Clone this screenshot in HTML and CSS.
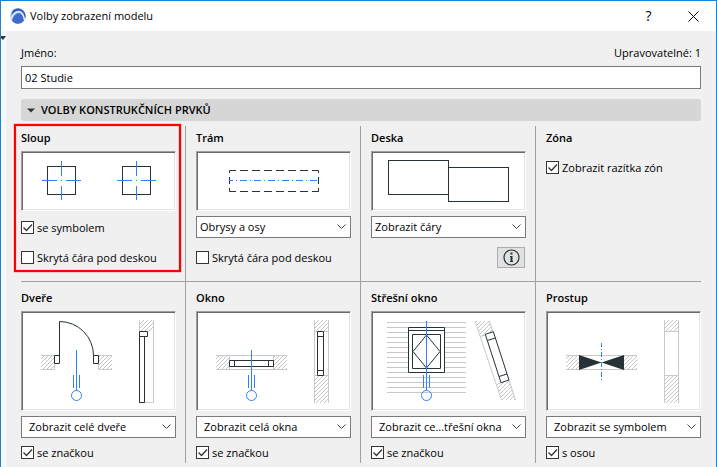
FILE: index.html
```html
<!DOCTYPE html>
<html lang="cs">
<head>
<meta charset="utf-8">
<title>Volby zobrazení modelu</title>
<link rel="stylesheet" href="styles.css">
</head>
<body>
<svg class="defs" width="0" height="0" aria-hidden="true">
  <defs>
    <pattern id="hatch" width="4" height="4" patternUnits="userSpaceOnUse">
      <path d="M-1 5L5 -1M-1 1L1 -1M3 5L5 3" stroke="#c4c4c4" stroke-width="1"/>
    </pattern>
    <g id="marker" class="blue">
      <path d="M55.5 39V79M52.5 64V77M58.5 64V77"/>
      <circle cx="55.5" cy="84.5" r="5"/>
    </g>
    <g id="column">
      <rect class="ink" x="26.5" y="15.5" width="28" height="28"/>
      <path class="blue" d="M21 29.5H36M40 29.5H41M45 29.5H60M40.5 10V25M40.5 35V49"/>
    </g>
    <g id="wall-section">
      <path class="hatch" d="M118 9H133V20H118ZM118 65H133V92H118Z"/>
      <path class="gray" d="M118.5 9V92M132.5 9V92M118 20.5H133M118 64.5H133"/>
    </g>
    <g id="wall-plan">
      <path class="hatch" d="M20 44H33V59H20ZM78 44H91V59H78Z"/>
      <path class="gray" d="M20 44.5H91M20 58.5H91M33.5 44V59M77.5 44V59"/>
    </g>
  </defs>
</svg>
<div class="dialog">
  <header class="titlebar">
    <svg class="logo" width="16" height="16" viewBox="0 0 16 16" aria-hidden="true">
      <circle cx="8" cy="8" r="7.7" fill="#8fb0e4"/>
      <path d="M4 1.500C9 -1 14.500 2 15.500 7C15.800 8.500 15.500 10 15 11C13.500 6 11 3.500 7.500 3C6 3 3.500 4.500 2 7C1.500 5 2.500 3 4 1.500Z" fill="#2f5fc0"/>
      <path d="M2 12.500C3.500 8 6 5.300 9 5C12 6 13.500 9 14 12.500A7.700 7.700 0 0 1 8 15.700C5 15.500 3 14.500 2 12.500Z" fill="#3f6ccb"/>
      <path d="M1 11C2.500 6.500 5.500 3.700 9 3.500C12.300 4.300 14 8 14.500 12" fill="none" stroke="#eaf1fc" stroke-width="1.300"/>
    </svg>
    <h1 class="title">Volby zobrazení modelu</h1>
    <button class="caption-button" type="button" aria-label="Nápověda">?</button>
    <button class="caption-button" type="button" aria-label="Zavřít">
      <svg width="11" height="11" viewBox="0 0 11 11"><path d="M.5 .5L10.500 10.500M10.500 .5L.5 10.500" stroke="#000" fill="none"/></svg>
    </button>
  </header>
  <div class="body">
    <div class="gutter"><svg width="5" height="4" viewBox="0 0 5 4"><path d="M0 0H5L2 4L0 2Z" fill="#333"/></svg></div>
    <main class="content">
      <div class="name-row">
        <label for="name">Jméno:</label>
        <span>Upravovatelné: 1</span>
      </div>
      <input class="name-input" id="name" type="text" value="02 Studie">
      <button class="section" type="button">
        <svg width="8" height="5" viewBox="0 0 8 5"><path d="M0 .5H8L4 4.500Z" fill="#333"/></svg>
        <span>VOLBY KONSTRUKČNÍCH PRVKŮ</span>
      </button>
      <div class="grid">
        <section class="cell highlighted">
          <h2>Sloup</h2>
          <div class="preview"><svg width="151" height="56" viewBox="2 2 151 56"><use href="#column"/><use href="#column" x="75"/></svg></div>
          <div class="line"><input type="checkbox" id="c1" checked><label for="c1">se symbolem</label></div>
          <div class="line second"><input type="checkbox" id="c2"><label for="c2">Skrytá čára pod deskou</label></div>
        </section>
        <section class="cell">
          <h2>Trám</h2>
          <div class="preview"><svg width="151" height="56" viewBox="2 2 151 56">
            <path class="ink" d="M33.500 22V19.500H40M44 19.500H52M56 19.500H64M68 19.500H76M80 19.500H88M92 19.500H100M104 19.500H112M116 19.500H122.500V22M122.500 26V33M122.500 37V40.500H116M112 40.500H104M100 40.500H92M88 40.500H80M76 40.500H68M64 40.500H56M52 40.500H44M40 40.500H33.500V37M33.500 33V26"/>
            <path class="blue" d="M33 29.500H123" stroke-dasharray="7 3 1 3" stroke-dashoffset="3"/>
          </svg></div>
          <select aria-label="Trám"><option>Obrysy a osy</option></select>
          <div class="line second"><input type="checkbox" id="c3"><label for="c3">Skrytá čára pod deskou</label></div>
        </section>
        <section class="cell">
          <h2>Deska</h2>
          <div class="preview"><svg width="151" height="56" viewBox="2 2 151 56">
            <rect class="ink" x="17.500" y="9.500" width="60" height="34"/><rect class="ink" x="77.500" y="16.500" width="60" height="34"/>
          </svg></div>
          <select aria-label="Deska"><option>Zobrazit čáry</option></select>
          <button class="info" type="button" aria-label="Informace">
            <svg width="17" height="17" viewBox="0 0 17 17"><circle cx="8.500" cy="8.500" r="7.500" fill="none" stroke="#263238" stroke-width="1.200"/><path d="M7.500 3.500H9.500V5.500H7.500ZM7 7H9.500V12.500H7.500V8H7ZM7 12H10V13H7Z" fill="#263238"/></svg>
          </button>
        </section>
        <section class="cell">
          <h2>Zóna</h2>
          <div class="line zone"><input type="checkbox" id="c4" checked><label for="c4">Zobrazit razítka zón</label></div>
        </section>
        <section class="cell lower">
          <h2>Dveře</h2>
          <div class="preview"><svg width="151" height="96" viewBox="2 2 151 96">
            <path class="hatch" d="M20 44H33V59H20ZM78 44H91V59H78ZM118 9H133V20H118Z"/>
            <path class="gray" d="M20 44.500H33.500V58.500H20M91 44.500H77.500V58.500H91M118.500 9V20M132.500 9V91.500H118"/>
            <path class="ink" d="M33.500 44.500H38.500V52.500H33.500ZM72.500 44.500H77.500V52.500H72.500ZM38.500 45V10.500M118.500 20.500H126.500V25.500H118.500ZM118.500 25.500H123.500V91.500H118.500Z"/>
            <path class="ink" d="M38.500 10.500A34 34 0 0 1 72.500 44.500"/>
            <use href="#marker"/>
          </svg></div>
          <select aria-label="Dveře"><option>Zobrazit celé dveře</option></select>
          <div class="line mark"><input type="checkbox" id="c5" checked><label for="c5">se značkou</label></div>
        </section>
        <section class="cell lower">
          <h2>Okno</h2>
          <div class="preview"><svg width="151" height="96" viewBox="2 2 151 96">
            <use href="#wall-plan"/><use href="#wall-section"/>
            <path class="ink" d="M33.500 49.500H77.500V55.500H33.500ZM38.500 49V56M72.500 49V56M121.500 20.500H127.500V64.500H121.500ZM121 25.500H128M121 59.500H128"/>
            <use href="#marker"/>
          </svg></div>
          <select aria-label="Okno"><option>Zobrazit celá okna</option></select>
          <div class="line mark"><input type="checkbox" id="c6" checked><label for="c6">se značkou</label></div>
        </section>
        <section class="cell lower">
          <h2>Střešní okno</h2>
          <div class="preview"><svg width="151" height="96" viewBox="2 2 151 96">
            <path class="gray" d="M16 11.500H95M16 16.500H95M16 21.500H95M16 26.500H95M16 31.500H95M16 36.500H95M16 41.500H95M16 46.500H95M16 51.500H95M16 56.500H95M16 61.500H95M16 66.500H95M16 71.500H95M16 76.500H95M16 81.500H95"/>
            <path class="ink filled" d="M37.500 16.500H73.500V61.500H37.500Z"/>
            <path class="ink" d="M37.500 19.500H73.500M41.500 23.500H69.500V57.500H41.500ZM55.500 24L69 40.500L55.500 57L42 40.500Z"/>
            <path class="blue" d="M55.500 10V40"/>
            <use href="#marker"/>
            <path class="hatch" d="M104 10H118.500L122 21L109.500 25.500ZM125.500 73.500L138 69L144.500 89H130.500Z"/>
            <path class="gray" d="M104 10L130.500 89M118.500 10L122 21M138 69L144.500 89M109.500 25.500L114 24M125.500 73.500L130 72"/>
            <path class="ink" d="M114.300 23.300L122.300 20.700L138 69L130 71.700ZM116.300 29.500L124.300 27M128 65.500L136 63"/>
          </svg></div>
          <select aria-label="Střešní okno"><option>Zobrazit ce...třešní okna</option></select>
          <div class="line mark"><input type="checkbox" id="c7" checked><label for="c7">se značkou</label></div>
        </section>
        <section class="cell lower">
          <h2>Prostup</h2>
          <div class="preview"><svg width="151" height="96" viewBox="2 2 151 96">
            <use href="#wall-plan"/><use href="#wall-section"/>
            <path class="blank" d="M33 45H78V58H33Z"/>
            <path d="M33 44L55.500 51.500L33 59ZM78 44L55.500 51.500L78 59Z" fill="#263238"/>
            <path class="blue" d="M55.500 32V71" stroke-dasharray="5 2 1 2" stroke-dashoffset="1"/>
          </svg></div>
          <select aria-label="Prostup"><option>Zobrazit se symbolem</option></select>
          <div class="line mark"><input type="checkbox" id="c8" checked><label for="c8">s osou</label></div>
        </section>
      </div>
    </main>
  </div>
</div>
</body>
</html>
```
FILE: styles.css
```css
* { box-sizing: border-box; }
body {
  margin: 0;
  background: #f0f0f0;
  color: #000;
  font: 11px/16px "Open Sans", "Noto Sans", sans-serif;
}
button, input, select { font: inherit; color: inherit; margin: 0; border-radius: 0; }
.defs { position: absolute; }
.dialog {
  display: flex;
  flex-direction: column;
  min-height: 100vh;
  border: 1px solid #1883d7;
  border-bottom: 0;
}
.titlebar {
  display: flex;
  align-items: center;
  height: 30px;
  padding-left: 9px;
  background: #fff;
}
.title { flex: 1; margin: 0 0 0 4px; font-size: 11px; font-weight: 400; }
.caption-button {
  display: flex;
  align-items: center;
  justify-content: center;
  width: 45px;
  height: 30px;
  padding: 0;
  border: 0;
  background: none;
  font-size: 14px;
}
.body { display: flex; flex: 1; }
.gutter { display: flex; width: 5px; padding-top: 5px; background: #f8f8f8; }
.content { flex: 1; min-width: 0; padding: 14px 15px 4px; }
.name-row { display: flex; justify-content: space-between; margin-bottom: 5px; }
.name-input {
  display: block;
  width: 100%;
  height: 23px;
  padding: 0 3px;
  border: 1px solid #7a7a7a;
  background: #fff;
}
.section {
  display: flex;
  align-items: center;
  gap: 6px;
  width: 100%;
  height: 22px;
  margin: 10px 0 5px;
  padding: 0 6px;
  border: 0;
  border-radius: 3px;
  background: #d6d6d6;
  font-weight: 600;
}
.grid { display: grid; grid-template-columns: repeat(4, minmax(0, 1fr)); column-gap: 20px; }
.cell { position: relative; }
.cell:not(:nth-child(4n + 1)) {
  margin-left: -11px;
  padding-left: 10px;
  border-left: 1px solid #a0a0a0;
}
.cell:not(.lower) { padding-bottom: 13px; }
.lower { padding-bottom: 3px; }
/* Rule between the two rows, carried across the column gaps */
.lower::before {
  content: "";
  display: block;
  height: 1px;
  margin: 0 -20px 0 -10px;
  background: #a0a0a0;
}
.lower:nth-child(4n + 1)::before { margin-left: 0; }
.lower:last-child::before { margin-right: 0; }
.highlighted::after {
  content: "";
  position: absolute;
  inset: -2px -5px 9px -7px;
  border: 2px solid #f00;
  box-shadow: 0 0 1px #f00, inset 0 0 1px #f00;
  pointer-events: none;
}
h2 { margin: 0; padding: 4px 0 5px; font-size: 11px; font-weight: 600; line-height: 16px; }
.lower h2 { padding: 8px 0 5px; }
.preview {
  display: flex;
  align-items: center;
  justify-content: center;
  margin-bottom: 5px;
  padding: 1px;
  border: 1px solid;
  border-color: #a0a0a0 #fff #fff #a0a0a0;
  background: #fff;
  box-shadow: inset 1px 1px #696969, inset -1px -1px #e3e3e3;
}
.preview svg { display: block; }
.ink { fill: none; stroke: #263238; }
.ink.filled { fill: #fff; }
.blank { fill: #fff; }
.blue { fill: none; stroke: #2f80ff; }
.gray { fill: none; stroke: #c9c9c9; }
.hatch { fill: url(#hatch); }
select {
  display: block;
  width: 100%;
  height: 22px;
  padding: 0 20px 0 3px;
  border: 1px solid #7a7a7a;
  appearance: none;
  background: #fff url("data:image/svg+xml,%3Csvg xmlns='http://www.w3.org/2000/svg' width='9' height='6'%3E%3Cpath d='M.5 .5L4.500 4.500L8.500 .5' fill='none' stroke='%23444'/%3E%3C/svg%3E") no-repeat right 4px center;
}
.lower select { padding-left: 7px; }
.line { display: flex; align-items: center; gap: 3px; height: 15px; white-space: nowrap; }
.preview + .line { margin-top: 9px; }
.line.second { margin-top: 12px; }
.line + .second { margin-top: 15px; }
.line.zone { margin-top: 9px; }
.line.mark { margin-top: 7px; }
input[type="checkbox"] {
  flex: none;
  width: 13px;
  height: 13px;
  appearance: none;
  border: 1px solid #333;
  background: #fff;
}
input[type="checkbox"]:checked {
  background: #fff url("data:image/svg+xml,%3Csvg xmlns='http://www.w3.org/2000/svg' width='11' height='11'%3E%3Cpath d='M1.500 5.500L4.500 8.500L10 2.500' fill='none' stroke='%23333' stroke-width='1.300'/%3E%3C/svg%3E") center no-repeat;
}
.info {
  display: flex;
  align-items: center;
  justify-content: center;
  width: 28px;
  height: 21px;
  margin: 9px 1px 0 auto;
  padding: 0;
  border: 1px solid #adadad;
  background: #e1e1e1;
}
```
